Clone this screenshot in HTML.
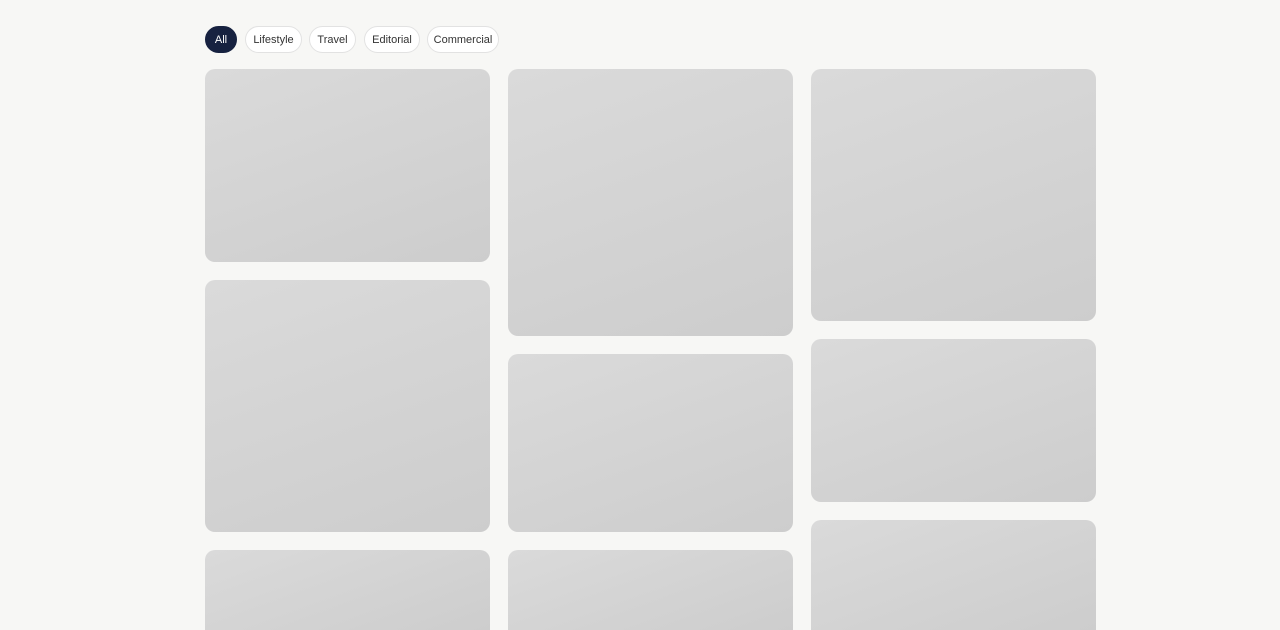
<!DOCTYPE html>
<html><head><style>
html,body{margin:0;height:630px;overflow:hidden}
body{background:#f7f7f5;font-family:"Liberation Sans",sans-serif;width:1280px;position:relative}
.p{position:absolute;top:26px;height:27px;border:1px solid #e2e2e2;background:#fff;border-radius:14px;font-size:11px;color:#333;display:flex;align-items:center;justify-content:center;box-sizing:border-box}
.c{position:absolute;border-radius:10px;background:linear-gradient(160deg,#dadada,#cdcdcd)}
.b{border-radius:10px 10px 0 0}
</style></head><body>
<div class="p" style="left:205px;width:32px;background:#172240;color:#fff;border-color:#172240">All</div>
<div class="p" style="left:245px;width:57px">Lifestyle</div>
<div class="p" style="left:309px;width:47px">Travel</div>
<div class="p" style="left:364px;width:56px">Editorial</div>
<div class="p" style="left:427px;width:72px">Commercial</div>
<div class="c" style="left:205px;top:69px;width:285px;height:193px"></div>
<div class="c" style="left:205px;top:280px;width:285px;height:252px"></div>
<div class="c b" style="left:205px;top:550px;width:285px;height:80px"></div>
<div class="c" style="left:508px;top:69px;width:285px;height:267px"></div>
<div class="c" style="left:508px;top:354px;width:285px;height:178px"></div>
<div class="c b" style="left:508px;top:550px;width:285px;height:80px"></div>
<div class="c" style="left:811px;top:69px;width:285px;height:252px"></div>
<div class="c" style="left:811px;top:339px;width:285px;height:163px"></div>
<div class="c b" style="left:811px;top:520px;width:285px;height:110px"></div>
</body></html>
